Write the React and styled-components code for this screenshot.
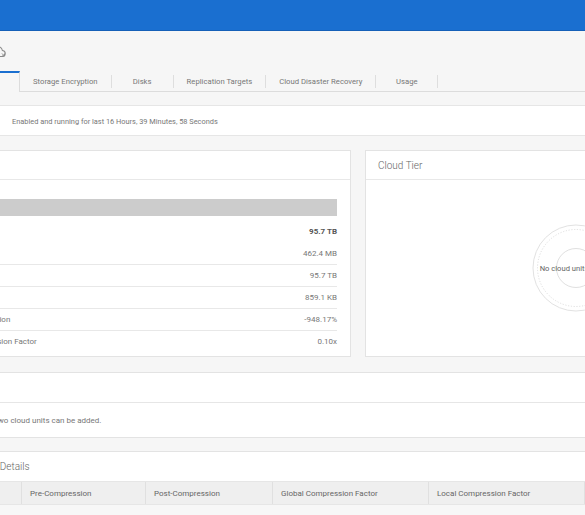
import React from "react";
import styled, { createGlobalStyle } from "styled-components";

const GlobalStyle = createGlobalStyle`
  html, body {
    margin: 0;
    padding: 0;
    background: #f6f6f6;
    overflow: hidden;
  }
  body {
    font-family: Roboto, "Liberation Sans", sans-serif;
    color: #707070;
  }
`;

const tabs = [
  "Storage Encryption",
  "Disks",
  "Replication Targets",
  "Cloud Disaster Recovery",
  "Usage",
];

const activeTier = [
  { label: "Size", value: "95.7 TB", bold: true },
  { label: "Used", value: "462.4 MB" },
  { label: "Available", value: "95.7 TB" },
  { label: "Cleanable", value: "859.1 KB" },
  { label: "Storage Reduction", value: "-948.17%" },
  { label: "Total Compression Factor", value: "0.10x" },
];

const columns = [
  { title: "Name", width: 90 },
  { title: "Pre-Compression", width: 124 },
  { title: "Post-Compression", width: 127 },
  { title: "Global Compression Factor", width: 156 },
  { title: "Local Compression Factor", width: 156 },
  { title: "Status", width: 110 },
];

function CloudIcon() {
  return (
    <svg width="18" height="13" viewBox="0 0 18 13" fill="none">
      <path
        d="M4.5 11.5h9.5a3 3 0 0 0 .4-6 4.5 4.5 0 0 0-8.6-1A3.3 3.3 0 0 0 4.5 11.5z"
        stroke="#8a8a8a"
        strokeWidth="1.1"
      />
      <path d="M14 8.5l2.5 2.5M16.5 8.5v2.5h-2.5" stroke="#8a8a8a" strokeWidth="1" />
    </svg>
  );
}

function EmptyRing() {
  return (
    <RingWrap>
      <svg width="88" height="88" viewBox="0 0 88 88">
        <circle cx="44" cy="44" r="43" fill="none" stroke="#e2e2e2" strokeWidth="1" />
        <circle
          cx="44"
          cy="44"
          r="38.5"
          fill="none"
          stroke="#d6d6d6"
          strokeWidth="0.8"
          strokeDasharray="1.2 1.6"
        />
        <circle cx="44" cy="44" r="19.5" fill="none" stroke="#e0e0e0" strokeWidth="1" />
      </svg>
      <RingLabel>No cloud units added</RingLabel>
    </RingWrap>
  );
}

export default function App() {
  return (
    <>
      <GlobalStyle />
      <Header />
      <Page>
        <Toolbar>
          <CloudIcon />
        </Toolbar>
        <TabBar>
          <ActiveTab>Summary</ActiveTab>
          <TabStrip>
            {tabs.map((t) => (
              <Tab key={t}>{t}</Tab>
            ))}
          </TabStrip>
        </TabBar>

        <StatusBand>
          <StatusLabel>Status</StatusLabel>
          <StatusText>
            Enabled and running for last 16 Hours, 39 Minutes, 58 Seconds
          </StatusText>
        </StatusBand>

        <Cards>
          <Card>
            <CardHeader>Active Tier</CardHeader>
            <CardBody>
              <UsageBar />
              <Rows>
                {activeTier.map((r, i) => (
                  <StatRow key={r.label} $divider={i > 1} $bold={r.bold}>
                    <span>{r.label}</span>
                    <span>{r.value}</span>
                  </StatRow>
                ))}
              </Rows>
            </CardBody>
          </Card>
          <Card>
            <CardHeader>Cloud Tier</CardHeader>
            <RingBody>
              <EmptyRing />
            </RingBody>
          </Card>
        </Cards>

        <Panel>
          <PanelHeader>Cloud Units</PanelHeader>
          <PanelBody>A maximum of two cloud units can be added.</PanelBody>
        </Panel>

        <Panel $gap={13}>
          <PanelHeader $pad={21}>Cloud Unit Details</PanelHeader>
          <TableHead>
            {columns.map((c, i) => (
              <HeadCell key={c.title} $w={c.width} $first={i === 0}>
                {c.title}
              </HeadCell>
            ))}
          </TableHead>
          <TableRow />
        </Panel>
      </Page>
    </>
  );
}

const Header = styled.div`
  height: 30px;
  background: #1a6fd0;
  border-bottom: 1px solid #1560b8;
`;

const Page = styled.div`
  margin-left: -69px;
  width: 854px;
`;

const Toolbar = styled.div`
  height: 40px;
  display: flex;
  align-items: center;
  padding-left: 57px;
  box-sizing: border-box;
`;

const TabBar = styled.div`
  display: flex;
  height: 21px;
`;

const ActiveTab = styled.div`
  width: 88px;
  border-top: 2px solid #1a6fd0;
  border-right: 1px solid #dcdcdc;
  font-size: 8px;
  color: #1a6fd0;
  display: flex;
  align-items: center;
  justify-content: center;
`;

const TabStrip = styled.div`
  flex: 1;
  display: flex;
  align-items: center;
  border-bottom: 1px solid #dcdcdc;
`;

const Tab = styled.div`
  min-width: 62px;
  padding: 0 13px;
  box-sizing: border-box;
  height: 13px;
  line-height: 13px;
  text-align: center;
  font-size: 7.7px;
  color: #777;
  border-right: 1px solid #dedede;
  white-space: nowrap;
`;

const StatusBand = styled.div`
  margin-top: 13px;
  height: 31px;
  box-sizing: border-box;
  background: #fff;
  border-top: 1px solid #e6e6e6;
  border-bottom: 1px solid #e6e6e6;
  display: flex;
  align-items: center;
  padding-top: 1px;
`;

const StatusLabel = styled.div`
  flex: 0 0 81px;
  padding-left: 13px;
  box-sizing: border-box;
  font-size: 8px;
  color: #555;
`;

const StatusText = styled.div`
  font-size: 7.4px;
  color: #777;
`;

const Cards = styled.div`
  margin-top: 14px;
  display: grid;
  grid-template-columns: 1fr 1fr;
  gap: 14px;
`;

const Card = styled.div`
  height: 207px;
  box-sizing: border-box;
  background: #fff;
  border: 1px solid #e3e3e3;
  display: flex;
  flex-direction: column;
`;

const CardHeader = styled.div`
  height: 29px;
  flex: 0 0 29px;
  box-sizing: border-box;
  border-bottom: 1px solid #e8e8e8;
  padding: 0 12px;
  display: flex;
  align-items: center;
  font-size: 10px;
  font-weight: 300;
  color: #666;
`;

const CardBody = styled.div`
  padding: 19px 13px 0;
`;

const UsageBar = styled.div`
  height: 17px;
  background: #cccccc;
`;

const Rows = styled.div`
  margin-top: 4px;
`;

const StatRow = styled.div`
  height: 22px;
  box-sizing: border-box;
  display: flex;
  align-items: center;
  justify-content: space-between;
  font-size: 8px;
  color: #777;
  border-top: ${(p) => (p.$divider ? "1px solid #e8e8e8" : "none")};

  span:last-child {
    font-weight: ${(p) => (p.$bold ? 700 : 400)};
    color: ${(p) => (p.$bold ? "#555" : "#777")};
  }
`;

const RingBody = styled.div`
  flex: 1;
  display: flex;
  align-items: center;
  justify-content: center;
`;

const RingWrap = styled.div`
  position: relative;
  width: 88px;
  height: 88px;
  margin-left: 1px;

  svg {
    display: block;
  }
`;

const RingLabel = styled.div`
  position: absolute;
  inset: 0;
  display: flex;
  align-items: center;
  justify-content: center;
  font-size: 7.6px;
  color: #666;
  white-space: nowrap;
`;

const Panel = styled.div`
  margin-top: ${(p) => p.$gap ?? 15}px;
  background: #fff;
  border-top: 1px solid #e3e3e3;
  border-bottom: 1px solid #e3e3e3;
`;

const PanelHeader = styled.div`
  height: 30px;
  box-sizing: border-box;
  border-bottom: 1px solid #e6e6e6;
  padding: 0 ${(p) => p.$pad ?? 13}px;
  display: flex;
  align-items: center;
  font-size: 10px;
  font-weight: 300;
  color: #666;
`;

const PanelBody = styled.div`
  height: 34px;
  display: flex;
  align-items: center;
  padding-left: 10px;
  font-size: 8px;
  color: #777;
`;

const TableHead = styled.div`
  display: flex;
  height: 22px;
  background: #efefef;
  border-bottom: 1px solid #e6e6e6;
`;

const HeadCell = styled.div`
  flex: 0 0 ${(p) => p.$w}px;
  box-sizing: border-box;
  padding-left: 8px;
  display: flex;
  align-items: center;
  font-size: 8px;
  color: #666;
  border-left: ${(p) => (p.$first ? "none" : "1px solid #e0e0e0")};
`;

const TableRow = styled.div`
  height: 22px;
  background: #f7f7f7;
`;
